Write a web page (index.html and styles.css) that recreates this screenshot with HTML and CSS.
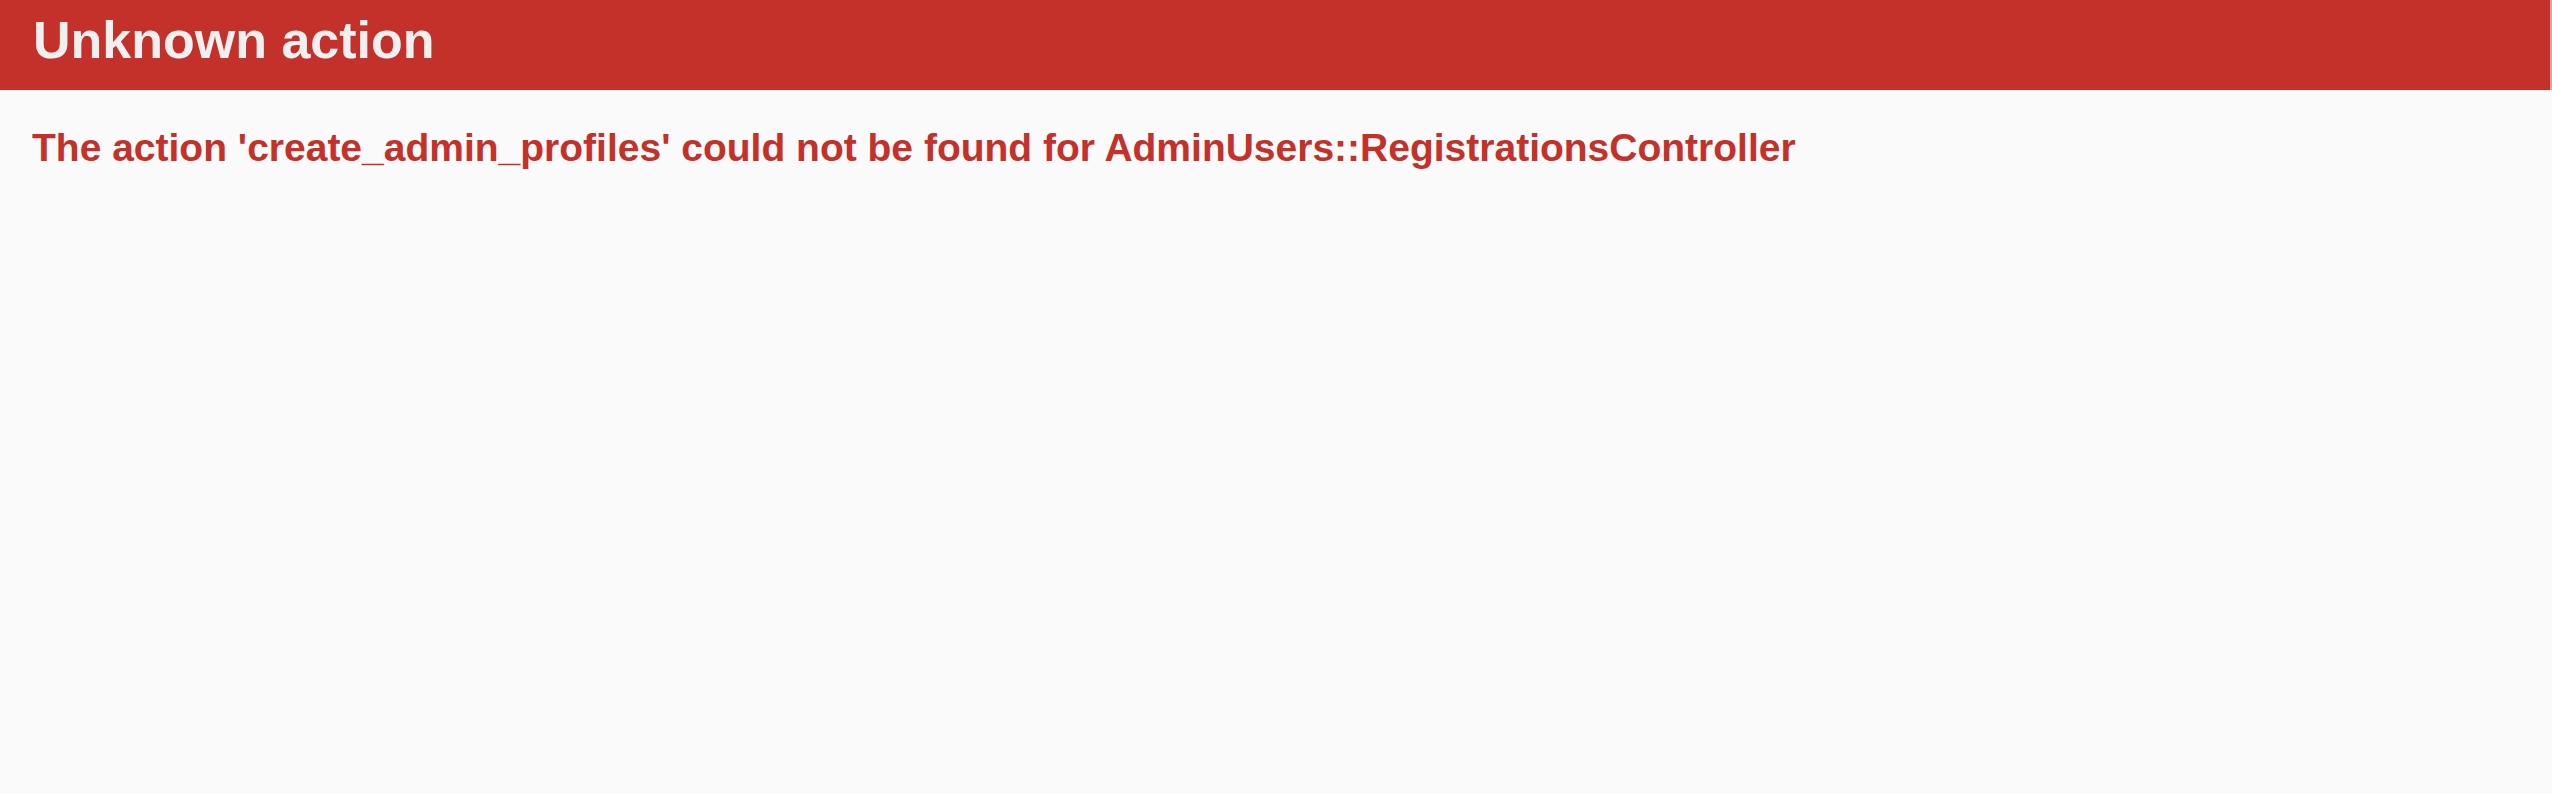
FILE: index.html
```html
<!DOCTYPE html>
<html>
<head>
<meta charset="utf-8">
<title>Action Controller: Exception caught</title>
<link rel="stylesheet" href="styles.css">
</head>
<body>
<header class="top">
  <h1 class="title">Unknown action</h1>
</header>
<main class="content">
  <h2 class="message">The action 'create_admin_profiles' could not be found for AdminUsers::RegistrationsController</h2>
</main>
</body>
</html>
```
FILE: styles.css
```css
html, body {
  margin: 0;
  padding: 0;
}
body {
  background-color: #FAFAFA;
  color: #333;
  font-family: "Liberation Sans", Arial, sans-serif;
  font-size: 26px;
  line-height: 36px;
  min-height: 794px;
}
.top {
  color: #F0F0F0;
  background: #C3312A;
  padding: 11.5px 33px 21.5px;
  margin-right: 2px;
  box-shadow: 2px 0 0 #E4A29E;
}
.title {
  margin: 0;
  font-size: 52px;
  line-height: 57px;
  font-weight: bold;
}
.content {
  padding: 0 32px;
}
.message {
  margin: 33px 0 0;
  color: #C3312A;
  font-size: 39px;
  line-height: 50px;
  font-weight: bold;
}
```
